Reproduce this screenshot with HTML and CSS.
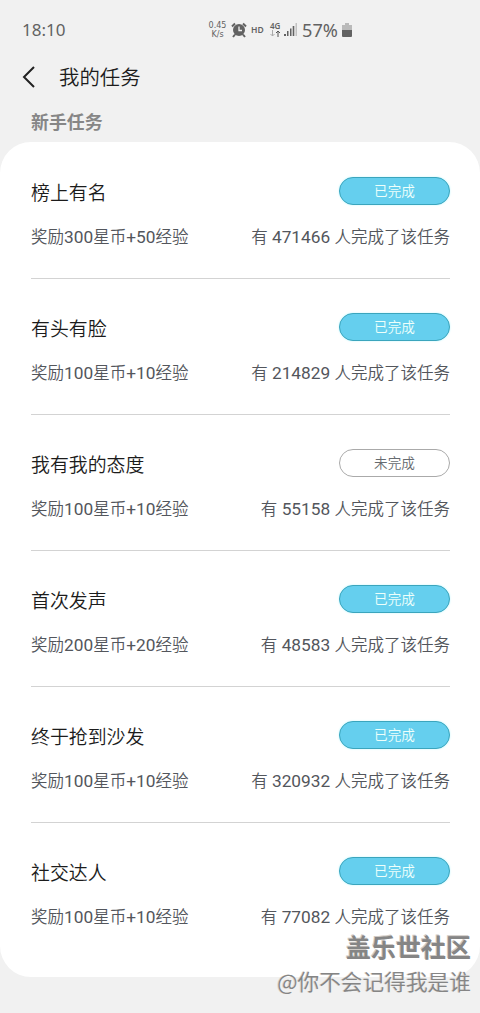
FILE: index.html
```html
<!DOCTYPE html>
<html lang="zh-CN">
<head>
<meta charset="utf-8">
<title>我的任务</title>
<link rel="stylesheet" href="styles.css">
</head>
<body>
<div class="screen">
  <header class="status">
    <span class="time">18:10</span>
    <div class="indicators">
      <span class="speed"><span>0.45</span><span>K/s</span></span>
      <svg class="alarm" width="16" height="16" viewBox="0 0 16 16"><path d="M1 4.5 4 1.5M15 4.5 12 1.5M4 12.5 2 15M12 12.5 14 15" stroke="#626262" stroke-width="2"/><circle cx="8" cy="8" r="6" fill="#626262"/><path d="M8 4.5V8.5H11" fill="none" stroke="#f1f1f1" stroke-width="1.3"/></svg>
      <span class="hd">HD</span>
      <span class="network"><span>4G</span><svg width="11" height="7" viewBox="0 0 11 7" fill="none"><path d="M2.5 0V6M.5 4 2.5 6 4.5 4" stroke="#aaa"/><path d="M8 7V1M6 3 8 1 10 3" stroke="#555"/></svg></span>
      <svg class="signal" width="13" height="13" viewBox="0 0 13 13"><path d="M0 11h2v2H0zM3 8h1.5v5H3zM6 5.5h1.5V13H6zM8.7 3h1.6v10H8.7z" fill="#626262"/><path d="M11.5 0H13v13h-1.5z" fill="#c2c2c2"/></svg>
      <span class="percent">57%</span>
      <svg class="battery" width="10" height="14" viewBox="0 0 10 14"><path d="M3 0h4v2h3v5H0V2h3z" fill="#bababa"/><path d="M0 7h10v6q0 1-1 1H1q-1 0-1-1z" fill="#626262"/></svg>
    </div>
  </header>
  <nav class="nav">
    <svg width="14" height="22" viewBox="0 0 14 22"><path d="M12 1 2 11 12 21" fill="none" stroke="#222" stroke-width="2"/></svg>
    <h1 class="title">我的任务</h1>
  </nav>
  <h2 class="section">新手任务</h2>
  <main class="card">
    <article class="task"><div class="row"><h3 class="name">榜上有名</h3><span class="pill done">已完成</span></div><div class="row info"><span>奖励<b>300</b>星币<b>+50</b>经验</span><span>有<b> 471466 </b>人完成了该任务</span></div></article>
    <article class="task"><div class="row"><h3 class="name">有头有脸</h3><span class="pill done">已完成</span></div><div class="row info"><span>奖励<b>100</b>星币<b>+10</b>经验</span><span>有<b> 214829 </b>人完成了该任务</span></div></article>
    <article class="task"><div class="row"><h3 class="name">我有我的态度</h3><span class="pill">未完成</span></div><div class="row info"><span>奖励<b>100</b>星币<b>+10</b>经验</span><span>有<b> 55158 </b>人完成了该任务</span></div></article>
    <article class="task"><div class="row"><h3 class="name">首次发声</h3><span class="pill done">已完成</span></div><div class="row info"><span>奖励<b>200</b>星币<b>+20</b>经验</span><span>有<b> 48583 </b>人完成了该任务</span></div></article>
    <article class="task"><div class="row"><h3 class="name">终于抢到沙发</h3><span class="pill done">已完成</span></div><div class="row info"><span>奖励<b>100</b>星币<b>+10</b>经验</span><span>有<b> 320932 </b>人完成了该任务</span></div></article>
    <article class="task"><div class="row"><h3 class="name">社交达人</h3><span class="pill done">已完成</span></div><div class="row info"><span>奖励<b>100</b>星币<b>+10</b>经验</span><span>有<b> 77082 </b>人完成了该任务</span></div></article>
  </main>
  <div class="watermark"><div class="community">盖乐世社区</div><div class="author"><span>@</span>你不会记得我是谁</div></div>
</div>
</body>
</html>
```
FILE: styles.css
```css
* { box-sizing: border-box; }
body { margin: 0; background: #f1f1f1; font-family: Roboto, "Noto Sans CJK SC", sans-serif; }
h1, h2, h3 { margin: 0; }
.screen { position: relative; height: 1013px; overflow: hidden; }
.status { height: 56px; padding: 3px 128px 0 21px; display: flex; align-items: center; justify-content: space-between; color: #626262; font-family: "Noto Sans", sans-serif; }
.time { padding: 1px 0 0 1px; font-size: 17px; line-height: 24px; }
.indicators { display: flex; align-items: center; }
.speed { width: 19px; display: flex; flex-direction: column; text-align: center; font-family: "DejaVu Sans", sans-serif; font-size: 8px; line-height: 9px; }
.alarm { margin-left: 4px; }
.hd { margin-left: 4px; width: 14px; font-size: 8.5px; font-weight: 600; }
.network { margin-left: 5px; width: 12px; display: flex; flex-direction: column; font-size: 8px; line-height: 8px; font-weight: 600; }
.signal { margin-left: 2px; }
.percent { margin-left: 5px; width: 38px; font-size: 18.2px; line-height: 24px; }
.battery { margin-left: 2px; }
.nav { height: 42px; padding-left: 22px; display: flex; align-items: center; gap: 23px; }
.title { padding-top: 2px; font-size: 20.4px; line-height: 30px; font-weight: 350; color: #1c1c1c; }
.section { height: 44px; padding: 12px 0 0 31px; font-size: 17.9px; line-height: 26px; font-weight: 700; color: #868686; }
.card { height: 835px; padding: 1px 30px 0 31px; border-radius: 31px; background: #fff; }
.task { height: 136px; padding-top: 34px; border-bottom: 1px solid #d3d3d3; }
.task:last-child { border-bottom: 0; }
.row { display: flex; justify-content: space-between; }
.name { padding-top: 3px; font-size: 18.9px; line-height: 28px; font-weight: 350; color: #1c1c1c; }
.pill { width: 111px; height: 28px; border: 1px solid #aaa; border-radius: 14px; font-size: 13.6px; line-height: 26px; font-weight: 350; text-align: center; color: #666b70; }
.pill.done { border-color: #3ba5bd; background: #65cfee; color: #eefffb; box-shadow: 0 0 2px #b9f6ff; }
.info { margin-top: 17px; font-size: 16.5px; line-height: 24px; font-weight: 350; color: #53565c; white-space: pre; }
.info b { font-family: Roboto, sans-serif; font-size: 17.3px; font-weight: 400; }
.watermark { position: absolute; right: 9px; bottom: 14px; text-align: right; color: #858585; text-shadow: -1px -1px 0 #cfcac5; }
.community { position: relative; top: 2px; font-size: 25px; line-height: 34px; font-weight: 700; }
.author { font-size: 21.7px; line-height: 33px; font-weight: 350; text-shadow: -1px 0 0 #d8d3ce; }
.author span { font-family: "Noto Sans CJK SC", sans-serif; }
```
